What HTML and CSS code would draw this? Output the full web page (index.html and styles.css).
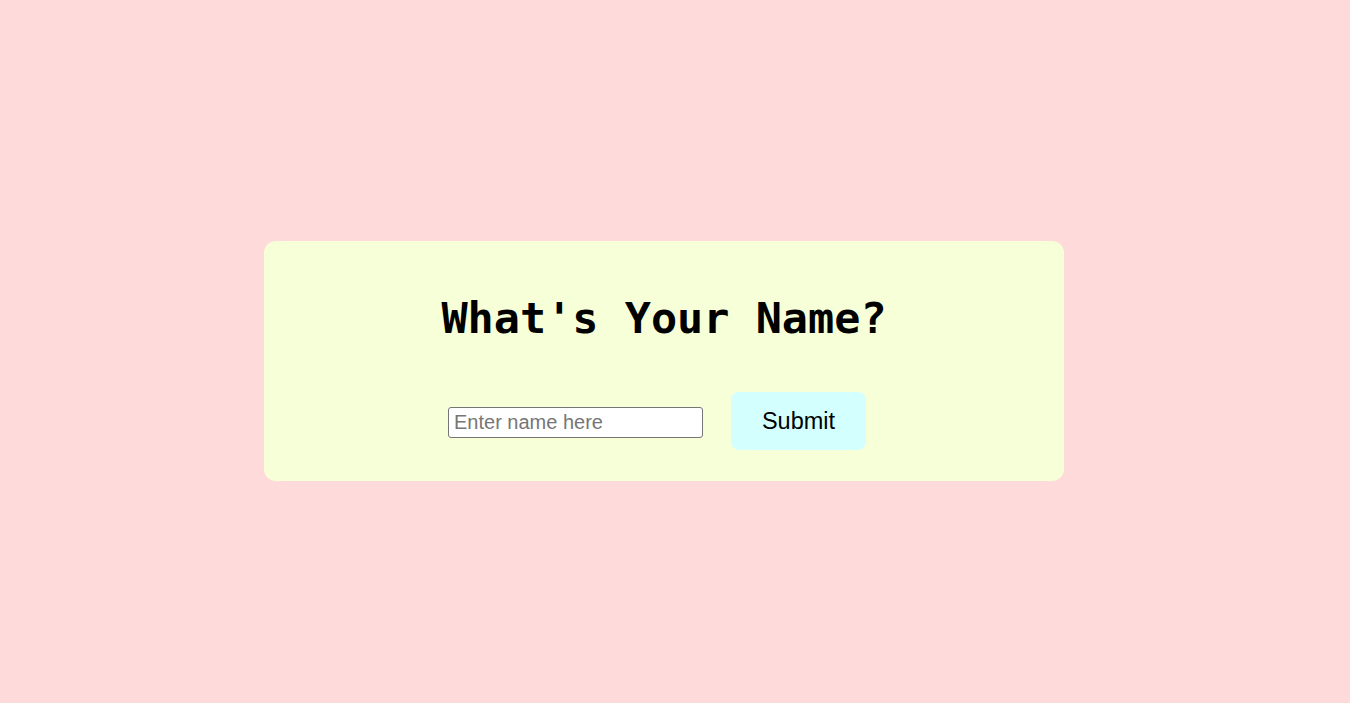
FILE: index.html
```html
<!DOCTYPE html>
<html lang="en">
<head>
<meta charset="utf-8">
<title>What's Your Name?</title>
<link rel="stylesheet" href="styles.css">
</head>
<body>
  <main class="card">
    <h1 class="title">What's Your Name?</h1>
    <form class="row" onsubmit="return false;">
      <input class="name-input" type="text" placeholder="Enter name here">
      <button class="submit" type="submit">Submit</button>
    </form>
  </main>
</body>
</html>
```
FILE: styles.css
```css
html, body {
  margin: 0;
  padding: 0;
}
body {
  background: #ffdada;
  min-height: 100vh;
  box-sizing: border-box;
  display: flex;
  align-items: center;
  justify-content: center;
  padding: 19px 22px 0 0;
  font-family: "Liberation Sans", Arial, sans-serif;
}
.card {
  width: 800px;
  height: 240px;
  box-sizing: border-box;
  background: #f7ffd9;
  border-radius: 12px;
  padding: 51px 0 31px;
  display: flex;
  flex-direction: column;
  align-items: center;
}
.title {
  margin: 0;
  font-family: "DejaVu Sans Mono", "Liberation Mono", monospace;
  font-weight: bold;
  font-size: 43.5px;
  line-height: 52px;
  height: 52px;
  color: #000;
  text-align: center;
}
.row {
  margin-top: 48px;
  height: 58px;
  display: flex;
  align-items: center;
  gap: 28px;
  padding-right: 14px;
}
.name-input {
  width: 255px;
  height: 31px;
  box-sizing: border-box;
  border: 1px solid #767676;
  border-radius: 3px;
  padding: 0 5px;
  font-family: "Liberation Sans", Arial, sans-serif;
  font-size: 20px;
  background: #fff;
  color: #000;
  margin-top: 3px;
}
.name-input::placeholder {
  color: #767676;
}
.submit {
  width: 135px;
  height: 58px;
  border: none;
  border-radius: 8px;
  background: #d4ffff;
  font-family: "Liberation Sans", Arial, sans-serif;
  font-size: 23.5px;
  color: #000;
  cursor: pointer;
  padding: 0;
}
```
